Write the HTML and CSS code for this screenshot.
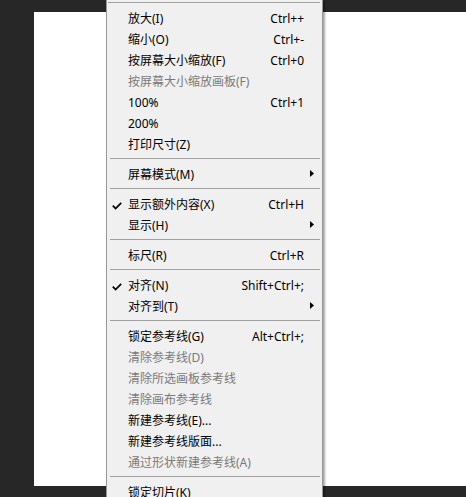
FILE: index.html
```html
<!DOCTYPE html>
<html lang="zh">
<head>
<meta charset="utf-8">
<title>视图菜单</title>
<link rel="stylesheet" href="styles.css">
</head>
<body>
<div class="workspace">
  <div class="canvas"></div>
  <div class="menu">
    <div class="sep sep-top"></div>
    <div class="item"><span class="chk"></span><span class="label">放大(I)</span><span class="key">Ctrl++</span><span class="sub"></span></div>
    <div class="item"><span class="chk"></span><span class="label">缩小(O)</span><span class="key">Ctrl+-</span><span class="sub"></span></div>
    <div class="item"><span class="chk"></span><span class="label">按屏幕大小缩放(F)</span><span class="key">Ctrl+0</span><span class="sub"></span></div>
    <div class="item disabled"><span class="chk"></span><span class="label">按屏幕大小缩放画板(F)</span><span class="key"></span><span class="sub"></span></div>
    <div class="item"><span class="chk"></span><span class="label">100%</span><span class="key">Ctrl+1</span><span class="sub"></span></div>
    <div class="item"><span class="chk"></span><span class="label">200%</span><span class="key"></span><span class="sub"></span></div>
    <div class="item"><span class="chk"></span><span class="label">打印尺寸(Z)</span><span class="key"></span><span class="sub"></span></div>
    <div class="sep"></div>
    <div class="item"><span class="chk"></span><span class="label">屏幕模式(M)</span><span class="key"></span><span class="sub"><svg width="4" height="7" viewBox="0 0 4 7"><polygon points="0,0 4,3.5 0,7" fill="#000"/></svg></span></div>
    <div class="sep"></div>
    <div class="item"><span class="chk"><svg width="10" height="8" viewBox="0 0 10 8"><path d="M0.8 3.6 L3.6 6.6 L9.2 0.8" fill="none" stroke="#000" stroke-width="1.7"/></svg></span><span class="label">显示额外内容(X)</span><span class="key">Ctrl+H</span><span class="sub"></span></div>
    <div class="item"><span class="chk"></span><span class="label">显示(H)</span><span class="key"></span><span class="sub"><svg width="4" height="7" viewBox="0 0 4 7"><polygon points="0,0 4,3.5 0,7" fill="#000"/></svg></span></div>
    <div class="sep"></div>
    <div class="item"><span class="chk"></span><span class="label">标尺(R)</span><span class="key">Ctrl+R</span><span class="sub"></span></div>
    <div class="sep"></div>
    <div class="item"><span class="chk"><svg width="10" height="8" viewBox="0 0 10 8"><path d="M0.8 3.6 L3.6 6.6 L9.2 0.8" fill="none" stroke="#000" stroke-width="1.7"/></svg></span><span class="label">对齐(N)</span><span class="key">Shift+Ctrl+;</span><span class="sub"></span></div>
    <div class="item"><span class="chk"></span><span class="label">对齐到(T)</span><span class="key"></span><span class="sub"><svg width="4" height="7" viewBox="0 0 4 7"><polygon points="0,0 4,3.5 0,7" fill="#000"/></svg></span></div>
    <div class="sep"></div>
    <div class="item"><span class="chk"></span><span class="label">锁定参考线(G)</span><span class="key">Alt+Ctrl+;</span><span class="sub"></span></div>
    <div class="item disabled"><span class="chk"></span><span class="label">清除参考线(D)</span><span class="key"></span><span class="sub"></span></div>
    <div class="item disabled"><span class="chk"></span><span class="label">清除所选画板参考线</span><span class="key"></span><span class="sub"></span></div>
    <div class="item disabled"><span class="chk"></span><span class="label">清除画布参考线</span><span class="key"></span><span class="sub"></span></div>
    <div class="item"><span class="chk"></span><span class="label">新建参考线(E)...</span><span class="key"></span><span class="sub"></span></div>
    <div class="item"><span class="chk"></span><span class="label">新建参考线版面...</span><span class="key"></span><span class="sub"></span></div>
    <div class="item disabled"><span class="chk"></span><span class="label">通过形状新建参考线(A)</span><span class="key"></span><span class="sub"></span></div>
    <div class="sep"></div>
    <div class="item"><span class="chk"></span><span class="label">锁定切片(K)</span><span class="key"></span><span class="sub"></span></div>
  </div>
</div>
</body>
</html>
```

FILE: styles.css
```css
html, body {
  margin: 0;
  padding: 0;
}
body {
  background: #272727;
  width: 466px;
  height: 497px;
  overflow: hidden;
  font-family: "Noto Sans", "Noto Sans CJK SC", sans-serif;
  font-size: 12px;
  color: #000;
}
.workspace {
  position: relative;
  width: 466px;
  height: 497px;
  padding-top: 12px;
  box-sizing: border-box;
}
.canvas {
  margin-left: 34px;
  width: 432px;
  height: 474px;
  background: #ffffff;
}
.menu {
  position: absolute;
  left: 106px;
  top: 0;
  width: 215px;
  height: 520px;
  background: #f0f0f0;
  border-left: 1px solid #979797;
  border-right: 1px solid #979797;
  box-shadow: 3px 0 2px -1px rgba(0, 0, 0, 0.35);
}
.sep {
  padding: 3px 2px 5px 3px;
}
.sep::before {
  content: "";
  display: block;
  height: 1px;
  background: #a0a0a0;
}
.sep-top {
  padding-top: 2px;
  padding-left: 1px;
}
.item {
  display: grid;
  grid-template-columns: 21px 1fr auto 18px;
  height: 21px;
  line-height: 21px;
  white-space: nowrap;
}
.item.disabled {
  color: #7a7a7a;
}
.chk {
  display: flex;
  align-items: flex-start;
  padding-left: 5px;
  padding-top: 8px;
}
.chk svg, .sub svg {
  display: block;
}
.label {
  overflow: hidden;
}
.key {
  text-align: right;
}
.sub {
  display: flex;
  align-items: flex-start;
  padding-left: 6px;
  padding-top: 6px;
}
```
